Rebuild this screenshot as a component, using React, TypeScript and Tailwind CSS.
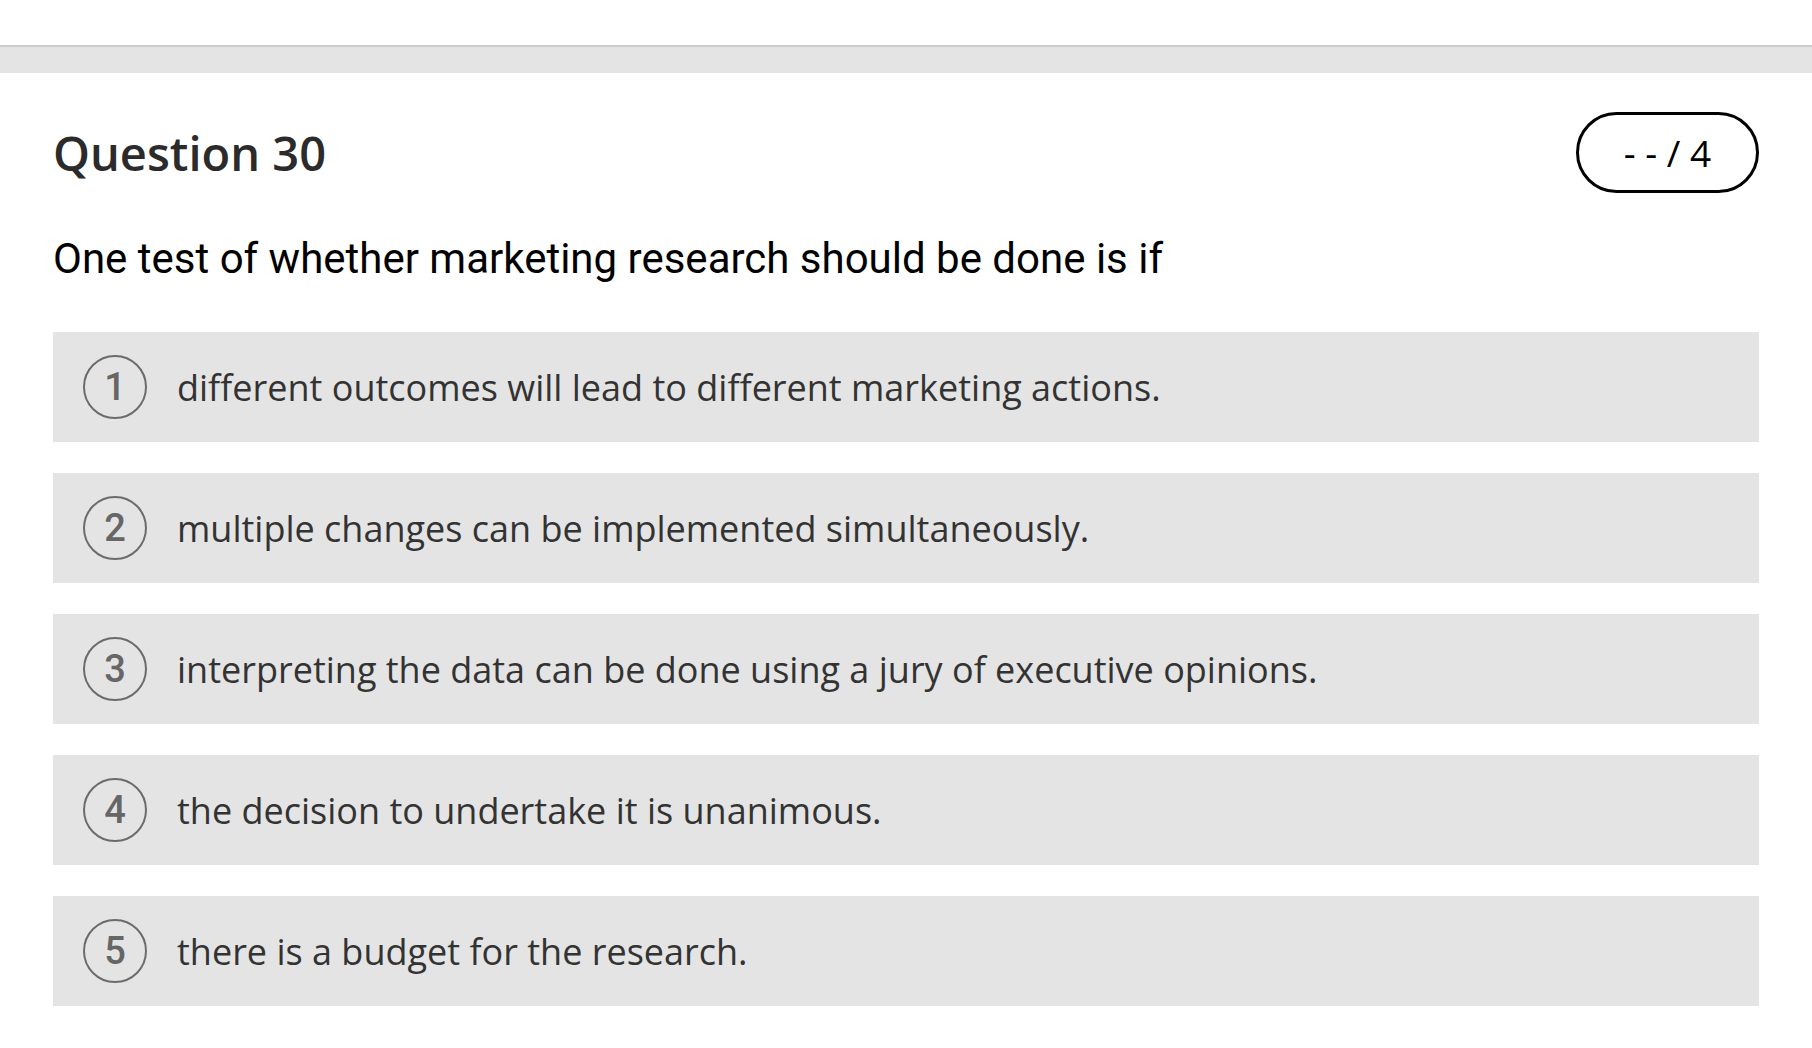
const options = [
  "different outcomes will lead to different marketing actions.",
  "multiple changes can be implemented simultaneously.",
  "interpreting the data can be done using a jury of executive opinions.",
  "the decision to undertake it is unanimous.",
  "there is a budget for the research.",
];

export default function App() {
  return (
    <div className="min-h-[1048px] bg-white font-['Open_Sans',sans-serif]">
      <div className="h-[45px]" />
      <div className="h-[28px] border-t-2 border-[#cbcbcb] bg-[#e4e4e4]" />

      <div className="px-[53px] pt-[39px]">
        <div className="flex items-center justify-between">
          <h1 className="pt-[2px] text-[47px] font-semibold leading-none text-[#2b2b2b]">Question 30</h1>
          <div className="flex h-[81px] w-[183px] items-center justify-center rounded-full border-[3px] border-black text-[37px] text-black">
            - - / 4
          </div>
        </div>

        <p className="mt-[41px] font-['Roboto',sans-serif] text-[42px] leading-[50px] text-black">
          One test of whether marketing research should be done is if
        </p>

        <div className="mt-[48px] flex flex-col gap-[31px]">
          {options.map((opt, i) => (
            <div key={i} className="flex h-[110px] items-center gap-[30px] bg-[#e4e4e4] px-[30px]">
              <span className="flex h-[64px] w-[64px] shrink-0 items-center justify-center rounded-full border-2 border-[#6b6b6b] font-['Roboto',sans-serif] text-[38px] font-medium text-[#666]">
                {i + 1}
              </span>
              <span className="pt-[2px] text-[36px] text-[#333]">{opt}</span>
            </div>
          ))}
        </div>
      </div>
    </div>
  );
}
